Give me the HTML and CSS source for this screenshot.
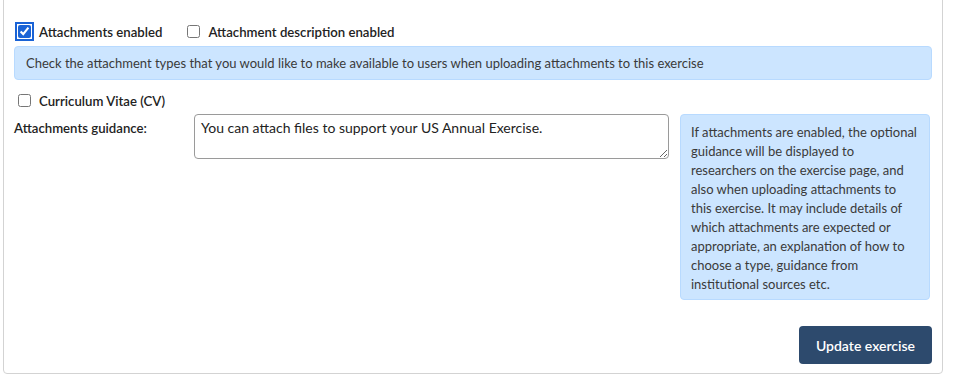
FILE: index.html
```html
<!DOCTYPE html>
<html lang="en">
<head>
    <meta charset="UTF-8">
    <meta name="viewport" content="width=device-width, initial-scale=1.0">
    <title>Exercise settings - Attachments</title>
    <link rel="stylesheet" href="styles.css">
</head>
<body>
    <div class="panel">
        <div class="check-row">
            <label class="check-label">
                <input type="checkbox" class="focused" checked> Attachments enabled
            </label>
            <label class="check-label">
                <input type="checkbox"> Attachment description enabled
            </label>
        </div>

        <div class="info-box">
            Check the attachment types that you would like to make available to users when uploading attachments to this exercise
        </div>

        <div class="check-row types">
            <label class="check-label">
                <input type="checkbox"> Curriculum Vitae (CV)
            </label>
        </div>

        <div class="guidance-row">
            <label for="guidance" class="field-label">Attachments guidance:</label>
            <textarea id="guidance" rows="2">You can attach files to support your US Annual Exercise.</textarea>
            <div class="help-box">
                If attachments are enabled, the optional guidance will be displayed to researchers on the exercise page, and also when uploading attachments to this exercise. It may include details of which attachments are expected or appropriate, an explanation of how to choose a type, guidance from institutional sources etc.
            </div>
        </div>

        <div class="actions">
            <button type="submit">Update exercise</button>
        </div>
    </div>
</body>
</html>
```

FILE: styles.css
```css
body {
    font-family: Lato, "Open Sans", Arial, sans-serif;
    background-color: #fff;
    color: #222;
    margin: 0;
}
.panel {
    width: 918px;
    margin: -1px 0 0 3px;
    padding: 23px 10px 9px 10px;
    border: 1px solid #d3d3d3;
    border-radius: 0 0 4px 4px;
}
.check-row {
    display: flex;
    align-items: center;
    height: 17px;
}
.check-label {
    display: inline-flex;
    align-items: center;
    font-size: 13.2px;
    font-weight: 600;
    margin-right: 21px;
}
.check-label input {
    width: 13px;
    height: 13px;
    margin: 0 8px 0 4px;
    accent-color: #1a63d6;
}
.check-label input.focused {
    outline: 2px solid #1a63d6;
    outline-offset: 1px;
    border-radius: 2px;
}
.info-box {
    margin-top: 6px;
    height: 32px;
    line-height: 32px;
    padding: 0 11px;
    background: #cce5ff;
    border: 1px solid #b8daff;
    border-radius: 4px;
    color: #3a3a3a;
    font-size: 13px;
}
.types {
    margin-top: 12px;
}
.guidance-row {
    display: flex;
    align-items: flex-start;
    margin-top: 5px;
}
.field-label {
    width: 180px;
    padding-top: 6px;
    font-size: 13.2px;
    font-weight: 600;
}
textarea {
    width: 461px;
    height: 33px;
    padding: 4px 6px 6px 6px;
    border: 1px solid #9a9a9a;
    border-radius: 4px;
    font-family: inherit;
    font-size: 14px;
    color: #222;
    resize: vertical;
}
.help-box {
    width: 228px;
    margin-left: 11px;
    padding: 8px 10px 5px 10px;
    background: #cce5ff;
    border: 1px solid #b8daff;
    border-radius: 4px;
    color: #3a3a3a;
    font-size: 13px;
    line-height: 19px;
}
.actions {
    display: flex;
    justify-content: flex-end;
    margin-top: 26px;
}
button {
    width: 133px;
    height: 38px;
    background: #2d4a6d;
    color: #fff;
    border: none;
    border-radius: 4px;
    font-family: inherit;
    font-size: 14px;
    font-weight: 600;
    cursor: pointer;
}
```
